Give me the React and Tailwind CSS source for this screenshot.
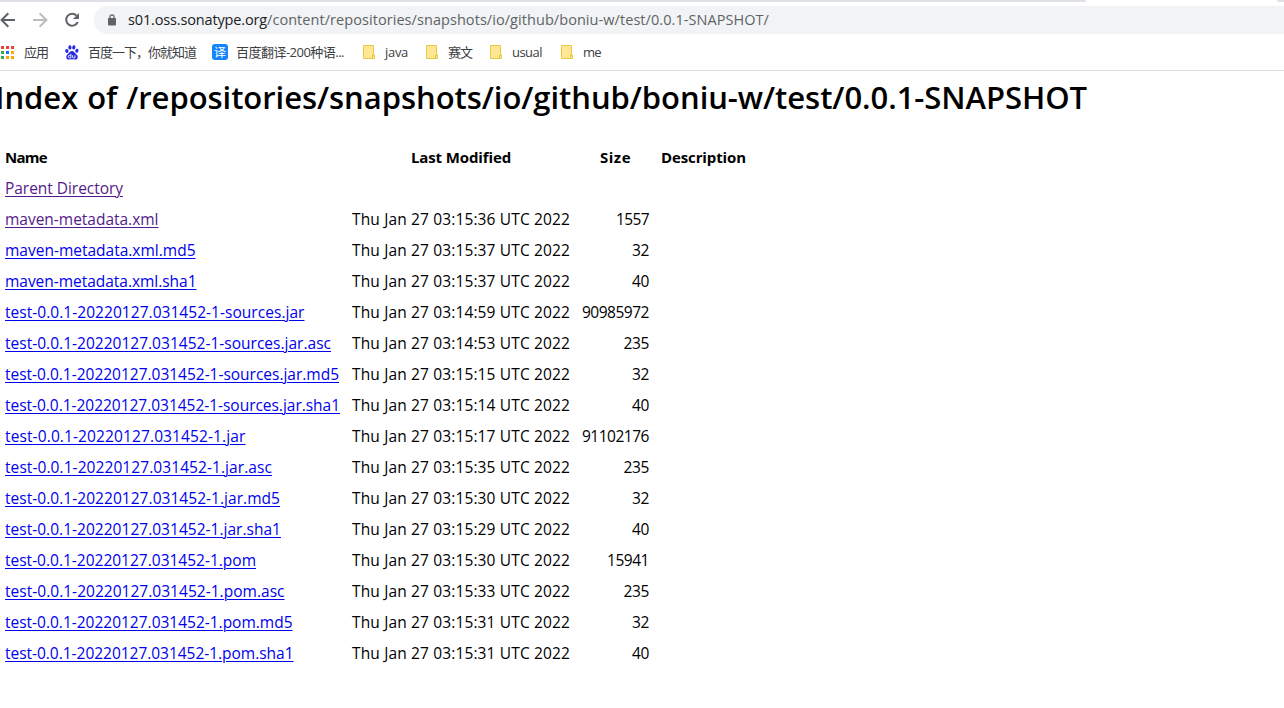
import { useLayoutEffect, useRef } from "react";
import { clsx } from "clsx";

// Spaces the letters of a line so that it fills the given width.
function Line({ text, width, as: Tag = "span", className, ...rest }) {
  const ref = useRef(null);
  useLayoutEffect(() => {
    const el = ref.current;
    el.style.letterSpacing = "0px";
    const natural = el.getBoundingClientRect().width;
    el.style.letterSpacing = `${(width - natural) / el.textContent.length}px`;
  }, [text, width]);
  return (
    <Tag ref={ref} className={clsx("inline-block whitespace-pre", className)} {...rest}>
      {text}
    </Tag>
  );
}

const T = "test-0.0.1-20220127.031452-1";
const rows = [
  ["Parent Directory", 118, "", "", 0, true],
  ["maven-metadata.xml", 153.5, "15:36", "1557", 33, true],
  ["maven-metadata.xml.md5", 190.5, "15:37", "32", 17],
  ["maven-metadata.xml.sha1", 191.5, "15:37", "40", 17],
  [T + "-sources.jar", 299.5, "14:59", "90985972", 67],
  [T + "-sources.jar.asc", 326, "14:53", "235", 25.5],
  [T + "-sources.jar.md5", 334, "15:15", "32", 17],
  [T + "-sources.jar.sha1", 335, "15:14", "40", 17],
  [T + ".jar", 240.5, "15:17", "91102176", 67],
  [T + ".jar.asc", 267, "15:35", "235", 25.5],
  [T + ".jar.md5", 275, "15:30", "32", 17],
  [T + ".jar.sha1", 276, "15:29", "40", 17],
  [T + ".pom", 251, "15:30", "15941", 42],
  [T + ".pom.asc", 279.5, "15:33", "235", 25.5],
  [T + ".pom.md5", 287.5, "15:31", "32", 17],
  [T + ".pom.sha1", 288.5, "15:31", "40", 17],
];

function Apps() {
  const colors = ["#ea4335", "#ea4335", "#ea4335", "#34a853", "#1a73e8", "#fbaa05", "#34a853", "#fbaa05", "#fbaa05"];
  return (
    <svg width="14" height="13" viewBox="0 0 14 13" shapeRendering="crispEdges" className="shrink-0">
      {colors.map((c, i) => (
        <rect key={i} x={1 + (i % 3) * 5} y={Math.floor(i / 3) * 5} width={i % 3 === 2 ? 3 : 3} height="3" fill={c} />
      ))}
    </svg>
  );
}

function Paw() {
  return (
    <svg width="14" height="15" viewBox="0 0 14 15" className="shrink-0">
      <g fill="#2629dc">
        <ellipse cx="1.9" cy="6" rx="1.6" ry="2.1" transform="rotate(-10 1.9 6)" />
        <ellipse cx="4.9" cy="2.4" rx="1.6" ry="2.2" />
        <ellipse cx="8.8" cy="2.4" rx="1.6" ry="2.2" transform="rotate(8 8.8 2.4)" />
        <ellipse cx="11.9" cy="5.7" rx="1.6" ry="2" transform="rotate(10 11.9 5.7)" />
        <path d="M7 6c1.9 0 2.4 1.6 3.7 2.8 1.1 1 2.3 1.9 2 3.6-.3 2-1.8 2.2-3.2 2.1-1-.1-1.6-.3-2.5-.3s-1.500.2-2.500.3c-1.400.1-2.900-.1-3.200-2.100-.3-1.700.9-2.600 2-3.600C4.600 7.600 5.100 6 7 6z" />
      </g>
      <path d="M5.900 8.800v4H4.300c-1.500 0-1.500-2.400 0-2.400h1.500M7.600 10.300v1.700q0 .8.800.8h1.500v-2.500" fill="none" stroke="#fff" strokeWidth=".9" />
    </svg>
  );
}

function Folder() {
  return (
    <svg width="12" height="14" viewBox="0 0 12 14" className="shrink-0">
      <path d="M.5.5h10v9.500h1v3.500H.5z" fill="#ffe793" stroke="#e9c846" />
      <path d="M9.500 13.500v-3.500h2" fill="none" stroke="#e9c846" />
    </svg>
  );
}

const mark = "text-[13px] leading-5 text-[#3c4043] font-['Open_Sans','Noto_Sans_CJK_SC',sans-serif]";

export default function App() {
  return (
    <div className="h-[708px] w-[1284px] overflow-hidden bg-white font-['Open_Sans',sans-serif] text-black">
      <div className="flex h-0.5 justify-between bg-white">
        <div className="h-0.5 w-[1086px] rounded-br-[2px] bg-[#dee1e6]" />
        <div className="h-0.5 w-[7px] rounded-bl-[2px] bg-[#dee1e6]" />
      </div>
      <div className="flex h-8 items-end">
        <svg width="94" height="28" viewBox="0 0 94 28" fill="none" strokeWidth="2" className="shrink-0">
          <path d="M15 14H2M8.300 7.300L1.600 14l6.700 6.700" stroke="#5f6368" />
          <path d="M33 14h13M39.700 7.300l6.700 6.700-6.700 6.700" stroke="#babcbe" />
          <path d="M76.600 9.600A6 6 0 1 0 77.700 16" stroke="#5f6368" />
          <path d="M79 7v6h-6z" fill="#5f6368" />
        </svg>
        <div className="flex h-7 flex-1 items-center rounded-l-full bg-[#f1f3f4] pl-3.5">
          <svg width="8" height="12" viewBox="0 0 8 12" className="mb-px shrink-0">
            <path d="M1.900 5V3a2.100 2.100 0 0 1 4.200 0v2" fill="none" stroke="#5f6368" strokeWidth="1.200" />
            <rect y="4" width="8" height="7.500" rx=".8" fill="#5f6368" />
          </svg>
          <div className="ml-3 flex text-[14.5px] leading-7">
            <Line text="s01.oss.sonatype.org" width={139} className="text-[#202124]" />
            <Line text="/content/repositories/snapshots/io/github/boniu-w/test/0.0.1-SNAPSHOT/" width={502} className="text-[#5f6368]" />
          </div>
        </div>
      </div>
      <div className="flex h-[37px] items-center border-b border-[#d9dadb]">
        <div className="flex h-full w-[65px] items-center gap-2.5">
          <Apps />
          <Line text="应用" width={24} className={mark} />
        </div>
        <div className="flex w-[147px] items-center gap-[9px]">
          <Paw />
          <Line text="百度一下，你就知道" width={108} className={mark} />
        </div>
        <div className="flex w-[151px] items-center gap-2">
          <span className="flex h-4 w-4 shrink-0 items-center justify-center rounded-[3px] bg-[#1684fc] font-['Noto_Sans_CJK_SC',sans-serif] text-[12px] leading-4 text-white">译</span>
          <Line text="百度翻译-200种语..." width={108} className={mark} />
        </div>
        <div className="flex w-[63px] items-center gap-2.5"><Folder /><Line text="java" width={23} className={mark} /></div>
        <div className="flex w-16 items-center gap-2.5"><Folder /><Line text="赛文" width={24} className={mark} /></div>
        <div className="flex w-[71px] items-center gap-2.5"><Folder /><Line text="usual" width={30} className={mark} /></div>
        <div className="flex items-center gap-2.5"><Folder /><Line text="me" width={18} className={mark} /></div>
      </div>

      <h1 className="-ml-[5px] mt-[5px] h-[66px] text-[31px] font-semibold leading-[42px]">
        <Line text="Index of /repositories/snapshots/io/github/boniu-w/test/0.0.1-SNAPSHOT" width={1092} className="[word-spacing:1px]" />
      </h1>
      <table className="ml-[5px] w-[741px] table-fixed border-collapse text-[15.5px] leading-[31px]">
        <colgroup>
          <col className="w-[347px]" />
          <col className="w-[218px]" />
          <col className="w-[79px]" />
          <col className="w-[97px]" />
        </colgroup>
        <thead>
          <tr className="h-[31px] text-[15px] font-bold">
            <th className="h-[31px] p-0 text-left"><Line text="Name" width={42} className="align-top" /></th>
            <th className="p-0 text-center"><Line text="Last Modified" width={100} className="align-top" /></th>
            <th className="p-0 pl-3 text-center"><Line text="Size" width={31} className="align-top" /></th>
            <th className="p-0 text-right"><Line text="Description" width={85} className="align-top" /></th>
          </tr>
        </thead>
        <tbody>
          {rows.map(([name, width, time, size, sizeWidth, visited]) => (
            <tr key={name} className="h-[31px]">
              <td className="h-[31px] p-0">
                <Line
                  as="a"
                  href="#"
                  text={name}
                  width={width}
                  className={clsx("align-top underline decoration-1 underline-offset-2", visited ? "text-[#551a8b]" : "text-[#0000ee]")}
                />
              </td>
              <td className="p-0">
                {time && <Line text={`Thu Jan 27 03:${time} UTC 2022`} width={218} className="align-top" />}
              </td>
              <td className="p-0 text-right">
                {size && <Line text={size} width={sizeWidth} className="align-top" />}
              </td>
              <td className="p-0" />
            </tr>
          ))}
        </tbody>
      </table>
    </div>
  );
}
